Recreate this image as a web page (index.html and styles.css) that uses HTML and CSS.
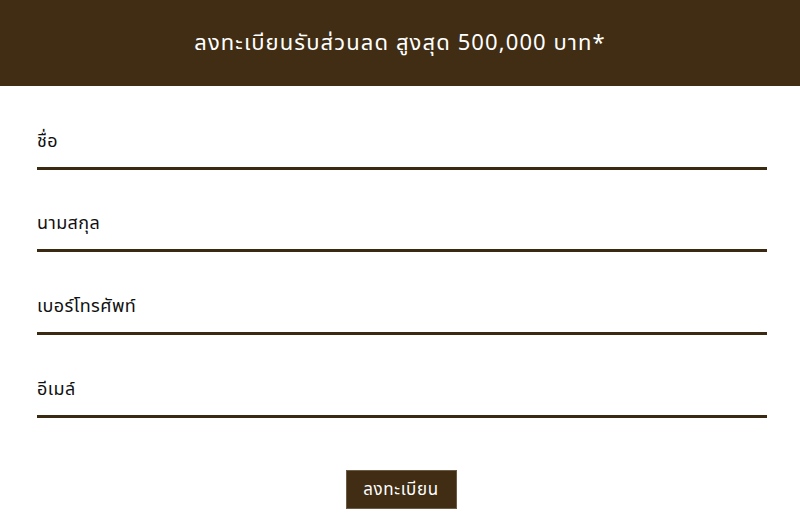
FILE: index.html
```html
<!DOCTYPE html>
<html lang="th">
<head>
    <meta charset="UTF-8">
    <meta name="viewport" content="width=device-width, initial-scale=1.0">
    <title>ลงทะเบียน</title>
    <link rel="stylesheet" href="styles.css">
</head>
<body>
    <!-- Header -->
    <div class="promo-header">
        <h1>ลงทะเบียนรับส่วนลด สูงสุด 500,000 บาท*</h1>
    </div>

    <!-- Register Form -->
    <form class="register-form">
        <input type="text" name="firstname" placeholder="ชื่อ">
        <input type="text" name="lastname" placeholder="นามสกุล">
        <input type="tel" name="phone" placeholder="เบอร์โทรศัพท์">
        <input type="email" name="email" placeholder="อีเมล์">

        <div class="submit-row">
            <button type="button">ลงทะเบียน</button>
        </div>
    </form>
</body>
</html>
```

FILE: styles.css
```css
body {
    margin: 0;
    font-family: "Noto Sans Thai", "Noto Sans", "Open Sans", sans-serif;
    background-color: #fff;
    color: #111;
}

.promo-header {
    background-color: #402d14;
    height: 86px;
    display: flex;
    align-items: center;
    justify-content: center;
}

.promo-header h1 {
    margin: 0;
    color: #fff;
    font-size: 22px;
    font-weight: normal;
    letter-spacing: 1.1px;
}

.register-form {
    display: flex;
    flex-direction: column;
    gap: 32px;
    padding: 34px 33px 0 37px;
}

.register-form input {
    box-sizing: border-box;
    width: 100%;
    height: 50px;
    padding: 0 0 4px 0;
    border: none;
    border-bottom: 3px solid #3b2a12;
    font-family: inherit;
    font-size: 18px;
    letter-spacing: 0.4px;
    color: #111;
    outline: none;
}

.register-form input:nth-of-type(n+3) {
    margin-top: 1px;
}

.register-form input::placeholder {
    color: #111;
}

.submit-row {
    display: flex;
    justify-content: center;
    margin-top: 20px;
    margin-left: -2px;
}

.submit-row button {
    width: 111px;
    height: 39px;
    background-color: #402d14;
    color: #fff;
    border: 1px solid #6b5a44;
    font-family: inherit;
    font-size: 17px;
    letter-spacing: 0.6px;
    cursor: pointer;
}
```
